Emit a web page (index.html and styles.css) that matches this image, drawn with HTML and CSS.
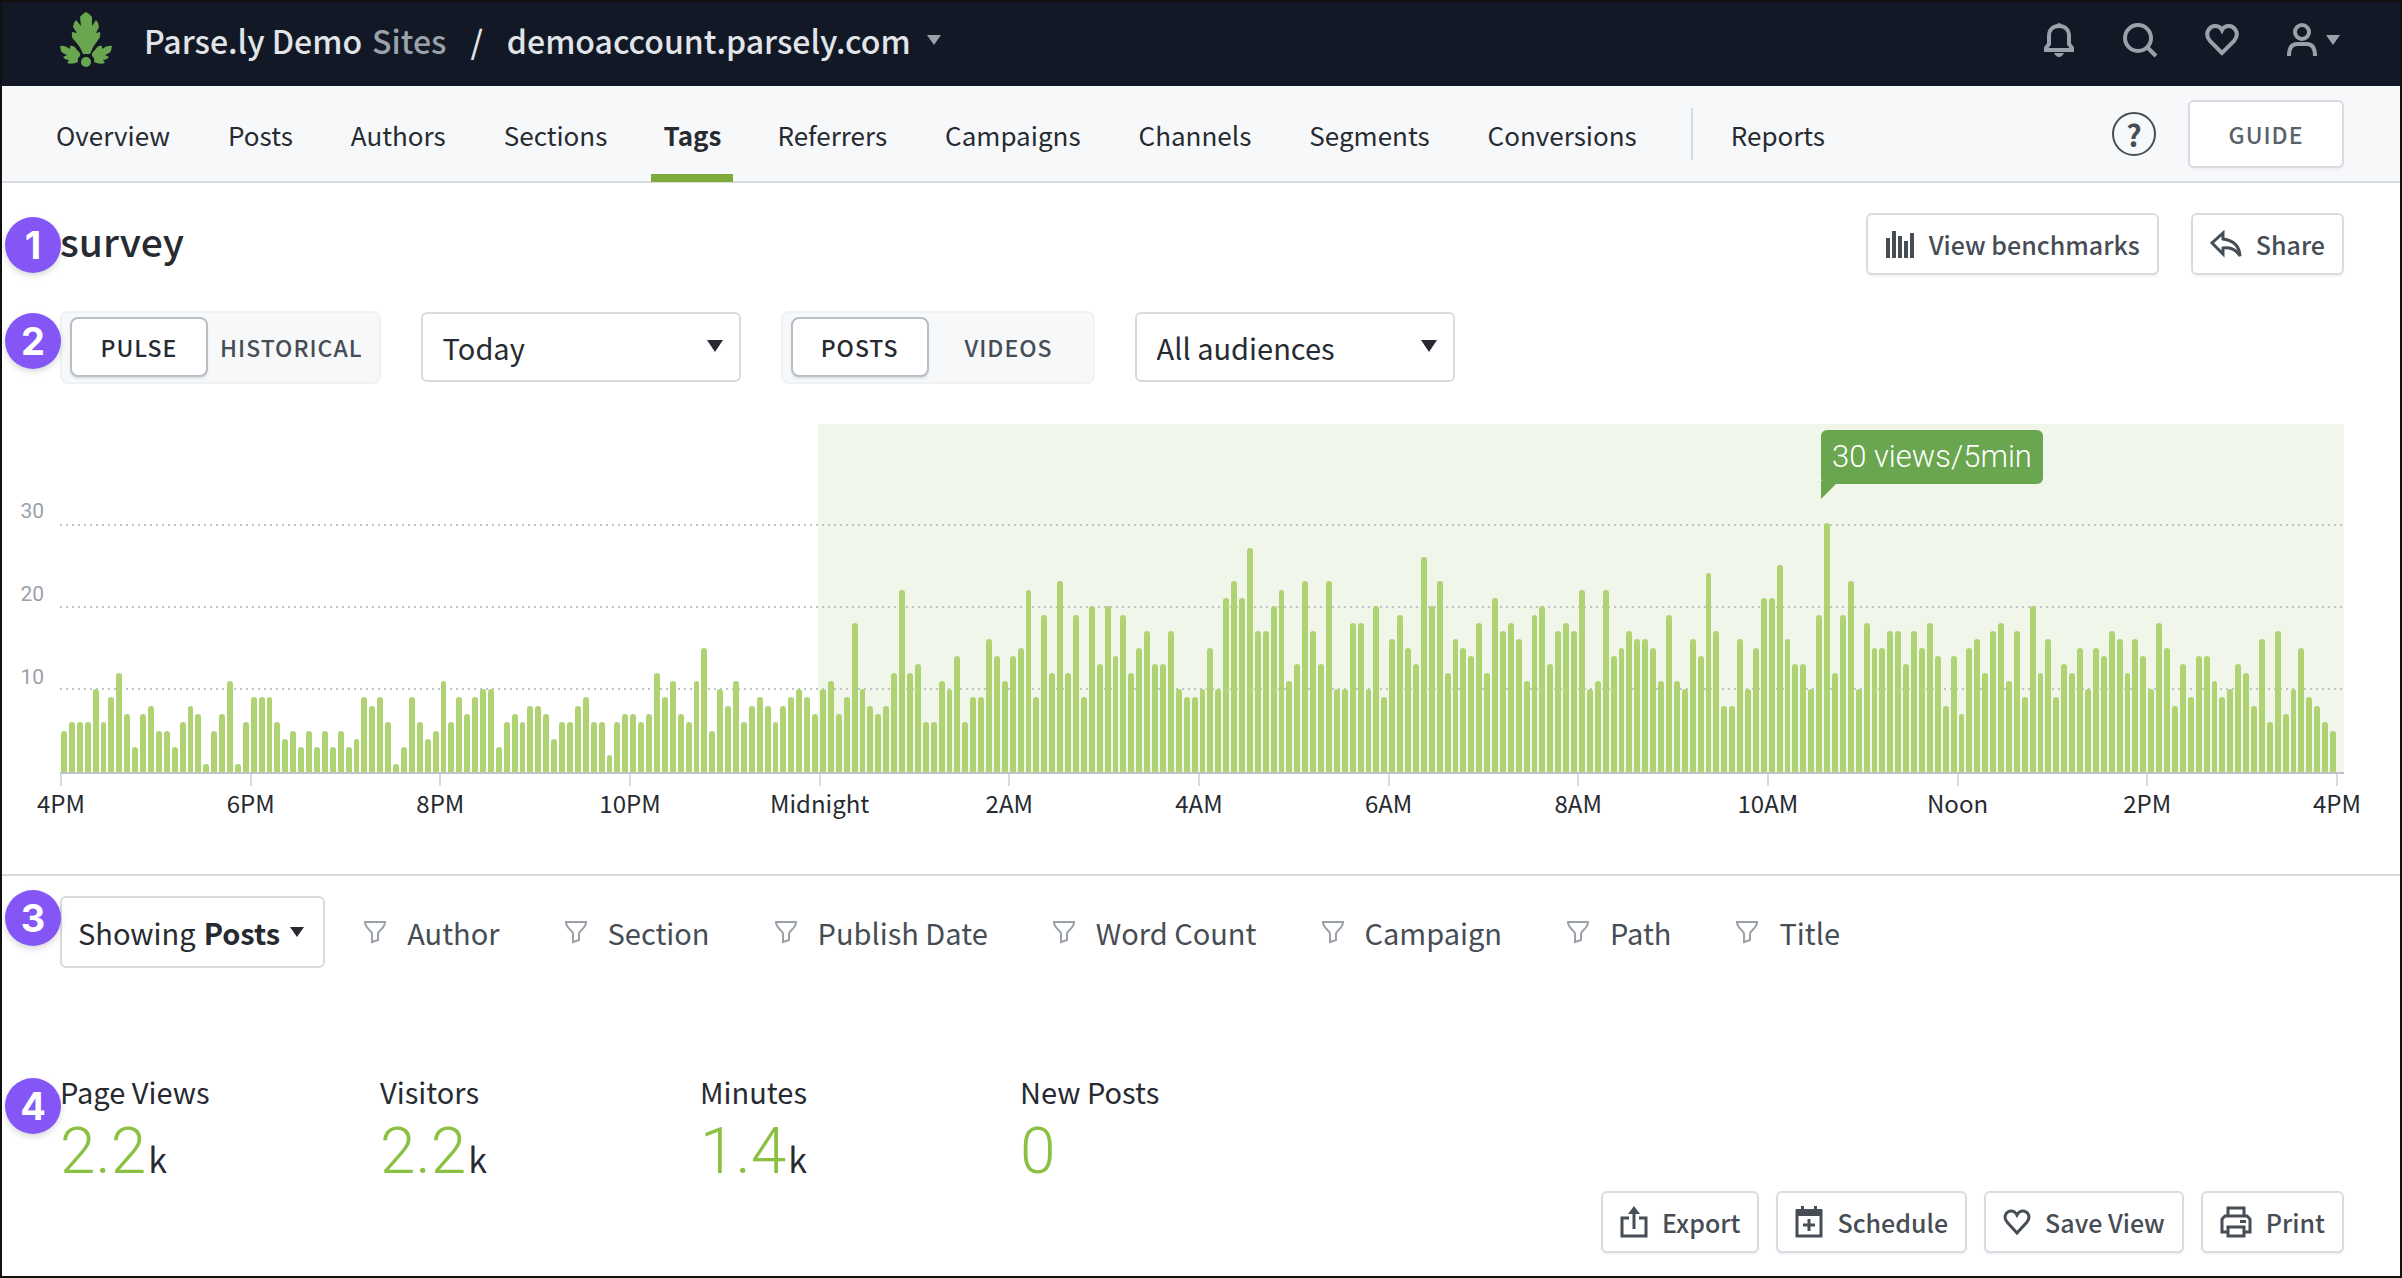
FILE: index.html
```html
<!DOCTYPE html>
<html lang="en">
<head>
    <meta charset="UTF-8">
    <meta name="viewport" content="width=device-width, initial-scale=1.0">
    <title>survey - Parse.ly</title>
    <link rel="stylesheet" href="styles.css">
</head>
<body>

    <header class="topbar">
        <a class="logo" href="#" aria-label="Parse.ly home">
            <svg viewBox="0 0 52 56" width="52" height="56">
                <path d="M26 0 Q30 2 32 5 V14 L36 8 Q39 11 39 15 L36 21 L40 20 Q41 25 38 28 Q33 34 30 42 H23 Q20 34 14 28 Q11 25 12 20 L17 21 L13 15 Q13 11 16 8 L21 14 L20 5 Q22 2 26 0 Z"/>
                <path d="M0 34 Q5 33 10 37 V34 Q14 33 17 38 Q21 41 20 44 Q17 46 18 50 Q12 53 7 51 L9 48 Q5 48 3 45 L7 43 Q2 41 1 39 Z"/>
                <path d="M52 34 Q47 33 42 37 V34 Q38 33 35 38 Q31 41 32 44 Q35 46 34 50 Q40 53 45 51 L43 48 Q47 48 49 45 L45 43 Q50 41 51 39 Z"/>
                <circle cx="26" cy="50" r="5"/>
            </svg>
        </a>
        <span class="account">Parse.ly Demo</span>
        <a class="sites" href="#">Sites</a>
        <span class="slash">/</span>
        <button class="site-picker">demoaccount.parsely.com <span class="caret"></span></button>
        <div class="top-icons">
            <button aria-label="Notifications">
                <svg viewBox="0 0 32 36" width="32" height="36"><path d="M3 28 V26 L6 22 V14 C6 8 10 4 16 4 S26 8 26 14 V22 L29 26 V28 Z"/><path class="fill" d="M11 31 H21 Q19 35 16 35 T11 31Z M13 3 Q16 -1 19 3Z"/></svg>
            </button>
            <button aria-label="Search">
                <svg viewBox="0 0 36 36" width="36" height="36"><circle cx="16" cy="16" r="13"/><path d="M25 25 L34 34"/></svg>
            </button>
            <button aria-label="Favorites">
                <svg viewBox="0 0 34 32" width="34" height="32"><path d="M17 29 L5 17 C-2 8 6 2 10 2 Q15 2 17 6 Q19 2 24 2 C28 2 36 8 29 17 Z"/></svg>
            </button>
            <button class="user" aria-label="Account">
                <svg viewBox="0 0 32 34" width="32" height="34"><circle cx="16" cy="9" r="7"/><path d="M3 33 C3 24 6 21 11 21 H21 C26 21 29 24 29 33"/></svg>
                <span class="caret"></span>
            </button>
        </div>
    </header>

    <nav class="nav">
        <a href="#">Overview</a>
        <a href="#">Posts</a>
        <a href="#">Authors</a>
        <a href="#">Sections</a>
        <a class="active" href="#">Tags</a>
        <a href="#">Referrers</a>
        <a href="#">Campaigns</a>
        <a href="#">Channels</a>
        <a href="#">Segments</a>
        <a href="#">Conversions</a>
        <span class="divider"></span>
        <a href="#">Reports</a>
        <button class="help" aria-label="Help">?</button>
        <button class="guide">GUIDE</button>
    </nav>

    <main>
        <section class="title-row">
            <span class="badge">1</span>
            <h1>survey</h1>
            <button class="btn">
                <svg viewBox="0 0 30 28" width="30" height="28"><path class="fill" d="M1 8h4v20h-4z M7 1h4v27h-4z M13 6h4v22h-4z M19 11h4v17h-4z M25 3h4v25h-4z"/></svg>
                View benchmarks
            </button>
            <button class="btn">
                <svg viewBox="0 0 32 28" width="32" height="28"><path d="M13 3 L2 13 L13 24 V18 Q24 16 30 26 Q29 11 13 9 Z"/></svg>
                Share
            </button>
        </section>

        <section class="controls">
            <span class="badge">2</span>
            <div class="toggle">
                <button class="on">PULSE</button>
                <button>HISTORICAL</button>
            </div>
            <div class="select">
                <select aria-label="Period"><option>Today</option></select>
            </div>
            <div class="toggle">
                <button class="on">POSTS</button>
                <button>VIDEOS</button>
            </div>
            <div class="select">
                <select aria-label="Audience"><option>All audiences</option></select>
            </div>
        </section>

        <section class="chart">
            <div class="y-axis">
                <span>30</span>
                <span>20</span>
                <span>10</span>
            </div>
            <div class="plot">
                <div class="today"></div>
                <div class="grid-line g30"></div>
                <div class="grid-line g20"></div>
                <div class="grid-line g10"></div>
                <div class="bars" id="bars"></div>
                <div class="tooltip">30 views/5min</div>
            </div>
            <div class="x-axis">
                <span>4PM</span>
                <span>6PM</span>
                <span>8PM</span>
                <span>10PM</span>
                <span>Midnight</span>
                <span>2AM</span>
                <span>4AM</span>
                <span>6AM</span>
                <span>8AM</span>
                <span>10AM</span>
                <span>Noon</span>
                <span>2PM</span>
                <span>4PM</span>
            </div>
        </section>

        <section class="filters">
            <span class="badge">3</span>
            <button class="showing">Showing <b>Posts</b> <span class="caret"></span></button>
            <button class="filter">Author</button>
            <button class="filter">Section</button>
            <button class="filter">Publish Date</button>
            <button class="filter">Word Count</button>
            <button class="filter">Campaign</button>
            <button class="filter">Path</button>
            <button class="filter">Title</button>
        </section>

        <section class="stats">
            <span class="badge">4</span>
            <div class="stat">
                <h2>Page Views</h2>
                <p><strong>2.2</strong> k</p>
            </div>
            <div class="stat">
                <h2>Visitors</h2>
                <p><strong>2.2</strong> k</p>
            </div>
            <div class="stat">
                <h2>Minutes</h2>
                <p><strong>1.4</strong> k</p>
            </div>
            <div class="stat">
                <h2>New Posts</h2>
                <p><strong>0</strong></p>
            </div>
        </section>

        <section class="actions">
            <button class="btn">
                <svg viewBox="0 0 28 32" width="28" height="32"><path d="M9 12 H2 V30 H26 V12 H19 M14 6 V23"/><path class="fill" d="M14 0 L20 8 H8 Z"/></svg>
                Export
            </button>
            <button class="btn">
                <svg viewBox="0 0 28 32" width="28" height="32"><path d="M2 5 H26 V30 H2 Z M14 13 V25 M8 19 H20"/><path class="fill" d="M1 3 H27 V10 H1 Z M6 0h3v4h-3z M19 0h3v4h-3z"/></svg>
                Schedule
            </button>
            <button class="btn">
                <svg viewBox="0 0 28 26" width="28" height="26"><path d="M14 24 L4 13 C-1 6 5 2 8 2 Q12 2 14 6 Q16 2 20 2 C23 2 29 6 24 13 Z"/></svg>
                Save View
            </button>
            <button class="btn">
                <svg viewBox="0 0 32 32" width="32" height="32"><path d="M8 10 V2 H24 V10 M8 26 H2 V13 L5 10 H27 L30 13 V26 H24 M8 21 H24 V30 H8 Z"/><path class="fill" d="M20 14h6v3h-6z"/></svg>
                Print
            </button>
        </section>
    </main>

    <script>
        // views per 5 minutes, one row per two hours
        const views = [
            5, 6, 6, 6, 10, 6, 9, 12, 7, 3, 7, 8, 5, 5, 3, 6, 8, 7, 1, 5, 7, 11, 1, 6,
            9, 9, 9, 6, 4, 5, 3, 5, 3, 5, 3, 5, 3, 4, 9, 8, 9, 6, 1, 3, 9, 6, 4, 5,
            11, 6, 9, 7, 9, 10, 10, 3, 6, 7, 6, 8, 8, 7, 4, 6, 6, 8, 9, 6, 6, 2, 6, 7,
            7, 6, 7, 12, 9, 11, 7, 6, 11, 15, 5, 10, 8, 11, 6, 8, 9, 8, 6, 8, 9, 10, 9, 7,
            10, 11, 7, 9, 18, 10, 8, 7, 8, 12, 22, 12, 13, 6, 6, 11, 10, 14, 6, 9, 9, 16, 14, 11,
            14, 15, 22, 9, 19, 12, 23, 12, 19, 9, 20, 13, 20, 14, 19, 12, 15, 17, 13, 13, 17, 10, 9, 9,
            10, 15, 10, 21, 23, 21, 27, 17, 17, 20, 22, 11, 13, 23, 17, 13, 23, 10, 10, 18, 18, 10, 20, 9,
            16, 19, 15, 13, 26, 20, 23, 12, 16, 15, 14, 18, 12, 21, 17, 18, 16, 11, 19, 20, 13, 17, 18, 17,
            22, 10, 11, 22, 14, 15, 17, 16, 16, 15, 11, 19, 11, 10, 16, 14, 24, 17, 8, 8, 16, 10, 15, 21,
            21, 25, 16, 13, 13, 10, 19, 30, 12, 19, 23, 10, 18, 15, 15, 17, 17, 13, 17, 15, 18, 14, 8, 14,
            7, 15, 16, 12, 17, 18, 11, 17, 9, 20, 12, 16, 9, 13, 12, 15, 10, 15, 14, 17, 16, 12, 16, 14,
            10, 18, 15, 8, 13, 9, 14, 14, 11, 9, 10, 13, 12, 8, 16, 6, 17, 7, 10, 15, 9, 8, 6, 5,
            0
        ];
        const scaleMax = 42;

        document.getElementById('bars').innerHTML = views
            .map(v => `<div class="bar" style="height: ${v / scaleMax * 100}%"></div>`)
            .join('');

        // every filter button gets the same funnel icon
        document.querySelectorAll('.filter').forEach(button => {
            button.insertAdjacentHTML('afterbegin',
                '<svg viewBox="0 0 24 24" width="24" height="24"><path d="M2 2 H22 C22 9 15 10 15 14 V20 L9 22 V14 C9 10 2 9 2 2 Z"/></svg>');
        });
    </script>

</body>
</html>
```
FILE: styles.css
```css
* {
    box-sizing: border-box;
}

body {
    margin: 0;
    min-height: 100vh;
    border: 2px solid #111;
    background-color: #fff;
    color: #272b31;
    font-family: "Noto Sans CJK SC", "Noto Sans", sans-serif;
    font-size: 26px;
}

button,
select {
    font: inherit;
    color: inherit;
    background: none;
    border: none;
    padding: 0;
    cursor: pointer;
}

a {
    color: inherit;
    text-decoration: none;
}

h1,
h2,
p {
    margin: 0;
    font-weight: 400;
}

svg {
    display: block;
    flex: none;
    fill: none;
    stroke: currentColor;
    stroke-width: 3;
}

svg .fill {
    fill: currentColor;
    stroke: none;
}

.caret {
    display: inline-block;
    border: 7px solid transparent;
    border-top: 10px solid currentColor;
    border-bottom: none;
}

/* top bar */
.topbar {
    display: flex;
    align-items: center;
    height: 84px;
    padding: 0 60px 8px 58px;
    background-color: #121826;
    color: #e1e4e8;
    font-size: 32px;
    font-weight: 500;
    line-height: 40px;
}

.logo {
    margin-right: 32px;
    color: #6aa550;
}

.logo svg {
    fill: currentColor;
    stroke: none;
}

.sites {
    margin-left: 10px;
    color: #9ba1a9;
}

.slash {
    margin: 0 24px;
}

.site-picker {
    display: flex;
    align-items: center;
    gap: 16px;
}

.topbar .caret {
    color: #9ba1a9;
}

.top-icons {
    display: flex;
    align-items: center;
    gap: 47px;
    margin-left: auto;
    color: #9ba1a9;
}

.top-icons svg {
    stroke-width: 4;
}

.user {
    display: flex;
    align-items: center;
    gap: 8px;
}

/* section nav */
.nav {
    display: flex;
    align-items: center;
    gap: 58px;
    height: 97px;
    padding: 0 56px 0 54px;
    border-bottom: 2px solid #d8dbe0;
    background-color: #f7f8fa;
}

.nav a {
    display: flex;
    align-items: center;
    height: 97px;
    padding-top: 2px;
}

.nav .active {
    margin: 0 -14px;
    padding: 10px 12px 0;
    border-bottom: 8px solid #7eaa3a;
    font-weight: 700;
}

.divider {
    width: 2px;
    height: 52px;
    margin: 0 -20px 0 -4px;
    background-color: #d8dbe0;
}

.help {
    width: 44px;
    height: 44px;
    margin-left: auto;
    border: 2px solid #474d55;
    border-radius: 50%;
    color: #474d55;
    font-size: 30px;
    font-weight: 700;
    line-height: 40px;
}

.guide {
    width: 156px;
    height: 68px;
    margin-left: -26px;
    border: 2px solid #d8dbe0;
    border-radius: 6px;
    background-color: #fff;
    box-shadow: 0 2px 2px #eceef1;
    color: #59616a;
    font-size: 23px;
    font-weight: 500;
    letter-spacing: 1px;
}

/* numbered markers */
.badge {
    position: absolute;
    left: -55px;
    top: 8px;
    width: 56px;
    height: 56px;
    border-radius: 50%;
    background-color: #8456f6;
    box-shadow: 0 3px 6px rgba(0, 0, 0, 0.15);
    color: #fff;
    font-family: Inter, sans-serif;
    font-size: 38px;
    font-weight: 700;
    line-height: 56px;
    text-align: center;
}

.title-row .badge {
    top: 34px;
}

.filters .badge {
    top: 16px;
}

.title-row,
.controls,
.filters,
.stats {
    position: relative;
    display: flex;
    align-items: center;
    margin: 0 56px 0 58px;
}

.title-row {
    gap: 32px;
    height: 122px;
}

.title-row h1 {
    margin-right: auto;
    padding-bottom: 8px;
    font-size: 39px;
    font-weight: 500;
}

.btn {
    display: flex;
    align-items: center;
    gap: 14px;
    height: 62px;
    padding: 0 17px;
    border: 2px solid #d8dbe0;
    border-radius: 6px;
    background-color: #fff;
    box-shadow: 0 2px 2px #f1f3f5;
    color: #474d55;
    font-size: 25px;
    font-weight: 500;
}

/* chart controls */
.controls {
    gap: 40px;
    height: 84px;
}

.toggle {
    display: flex;
    align-items: center;
    height: 73px;
    padding: 6px 8px;
    border: 2px solid #eff1f3;
    border-radius: 8px;
    background-color: #f7f8fa;
    color: #474d55;
    font-size: 23px;
    font-weight: 500;
}

.toggle button {
    min-width: 156px;
    height: 60px;
    padding: 0 8px 0 12px;
    letter-spacing: 1px;
}

.toggle .on {
    min-width: 0;
    width: 138px;
    padding: 0;
    border: 2px solid #b9bfc7;
    border-radius: 8px;
    background-color: #fff;
    box-shadow: 0 2px 2px #dfe2e6;
    color: #272b31;
}

.select {
    display: flex;
    position: relative;
}

.select select {
    width: 320px;
    height: 70px;
    padding: 0 20px;
    border: 2px solid #d8dbe0;
    border-radius: 6px;
    background-color: #fff;
    font-size: 29px;
    appearance: none;
}

.select::after {
    content: "";
    position: absolute;
    right: 18px;
    top: 28px;
    border: 8px solid transparent;
    border-top: 12px solid #272b31;
    border-bottom: none;
    pointer-events: none;
}

/* chart */
.chart {
    display: grid;
    grid-template-columns: 58px 1fr;
    margin: 35px 56px 0 0;
}

.y-axis {
    display: flex;
    flex-direction: column;
    padding: 46px 16px 0 0;
    color: #9ba1a9;
    font-family: Roboto, sans-serif;
    font-size: 21px;
    line-height: 83px;
    text-align: right;
}

.plot {
    position: relative;
    height: 350px;
    border-bottom: 2px solid #c0c3c9;
}

.today {
    position: absolute;
    top: 0;
    bottom: 0;
    left: 33.2%;
    right: 0;
    background-color: #f0f6e9;
}

.grid-line {
    position: absolute;
    left: 0;
    right: 0;
    height: 2px;
    background: repeating-linear-gradient(90deg, #c0c3c9 0 2px, transparent 2px 6px);
}

.g30 {
    bottom: 246px;
}

.g20 {
    bottom: 164px;
}

.g10 {
    bottom: 82px;
}

.bars {
    position: relative;
    display: flex;
    align-items: flex-end;
    gap: 2px;
    height: 100%;
    padding-left: 1px;
}

.bar {
    flex: 1;
    border-radius: 3px 3px 0 0;
    background-color: #afd373;
}

.tooltip {
    position: absolute;
    left: 77.1%;
    top: 6px;
    padding: 0 11px;
    border-radius: 6px;
    background-color: #6aa550;
    color: #fff;
    font-family: Roboto, sans-serif;
    font-size: 31px;
    font-weight: 300;
    line-height: 54px;
    white-space: nowrap;
}

.tooltip::after {
    content: "";
    position: absolute;
    left: 0;
    bottom: -15px;
    border-top: 18px solid #6aa550;
    border-right: 18px solid transparent;
}

.x-axis {
    grid-column: 2;
    display: flex;
    justify-content: space-between;
    padding-right: 6px;
    font-size: 24px;
    line-height: 34px;
}

.x-axis span {
    display: flex;
    flex-direction: column;
    align-items: center;
    width: 2px;
    white-space: nowrap;
}

.x-axis span::before {
    content: "";
    flex: none;
    width: 2px;
    height: 12px;
    background-color: #d8dbe0;
}

/* filters */
.filters {
    height: 116px;
    margin-top: 54px;
    color: #474d55;
    font-size: 29px;
}

.filters::before {
    content: "";
    position: absolute;
    top: 0;
    left: -58px;
    right: -56px;
    border-top: 2px solid #d8dbe0;
}

.showing {
    display: flex;
    align-items: center;
    gap: 8px;
    height: 72px;
    padding: 0 19px 0 16px;
    border: 2px solid #d8dbe0;
    border-radius: 6px;
    color: #272b31;
}

.showing .caret {
    margin-left: 2px;
}

.filter {
    display: flex;
    align-items: center;
    gap: 20px;
    margin-left: 38px;
}

.filter + .filter {
    margin-left: 64px;
}

.filter svg {
    color: #9ba1a9;
    stroke-width: 2;
}

/* totals */
.stats {
    align-items: flex-start;
    margin-top: 80px;
}

.stat {
    width: 320px;
}

.stat h2 {
    font-size: 29px;
    line-height: 42px;
}

.stat p {
    display: flex;
    align-items: baseline;
    gap: 2px;
    padding-top: 8px;
    font-size: 34px;
    line-height: 64px;
}

.stat strong {
    color: #8bc043;
    font-family: Roboto, sans-serif;
    font-size: 64px;
    font-weight: 300;
}

.actions {
    display: flex;
    justify-content: flex-end;
    gap: 17px;
    margin: 0 56px 0 0;
}
```
